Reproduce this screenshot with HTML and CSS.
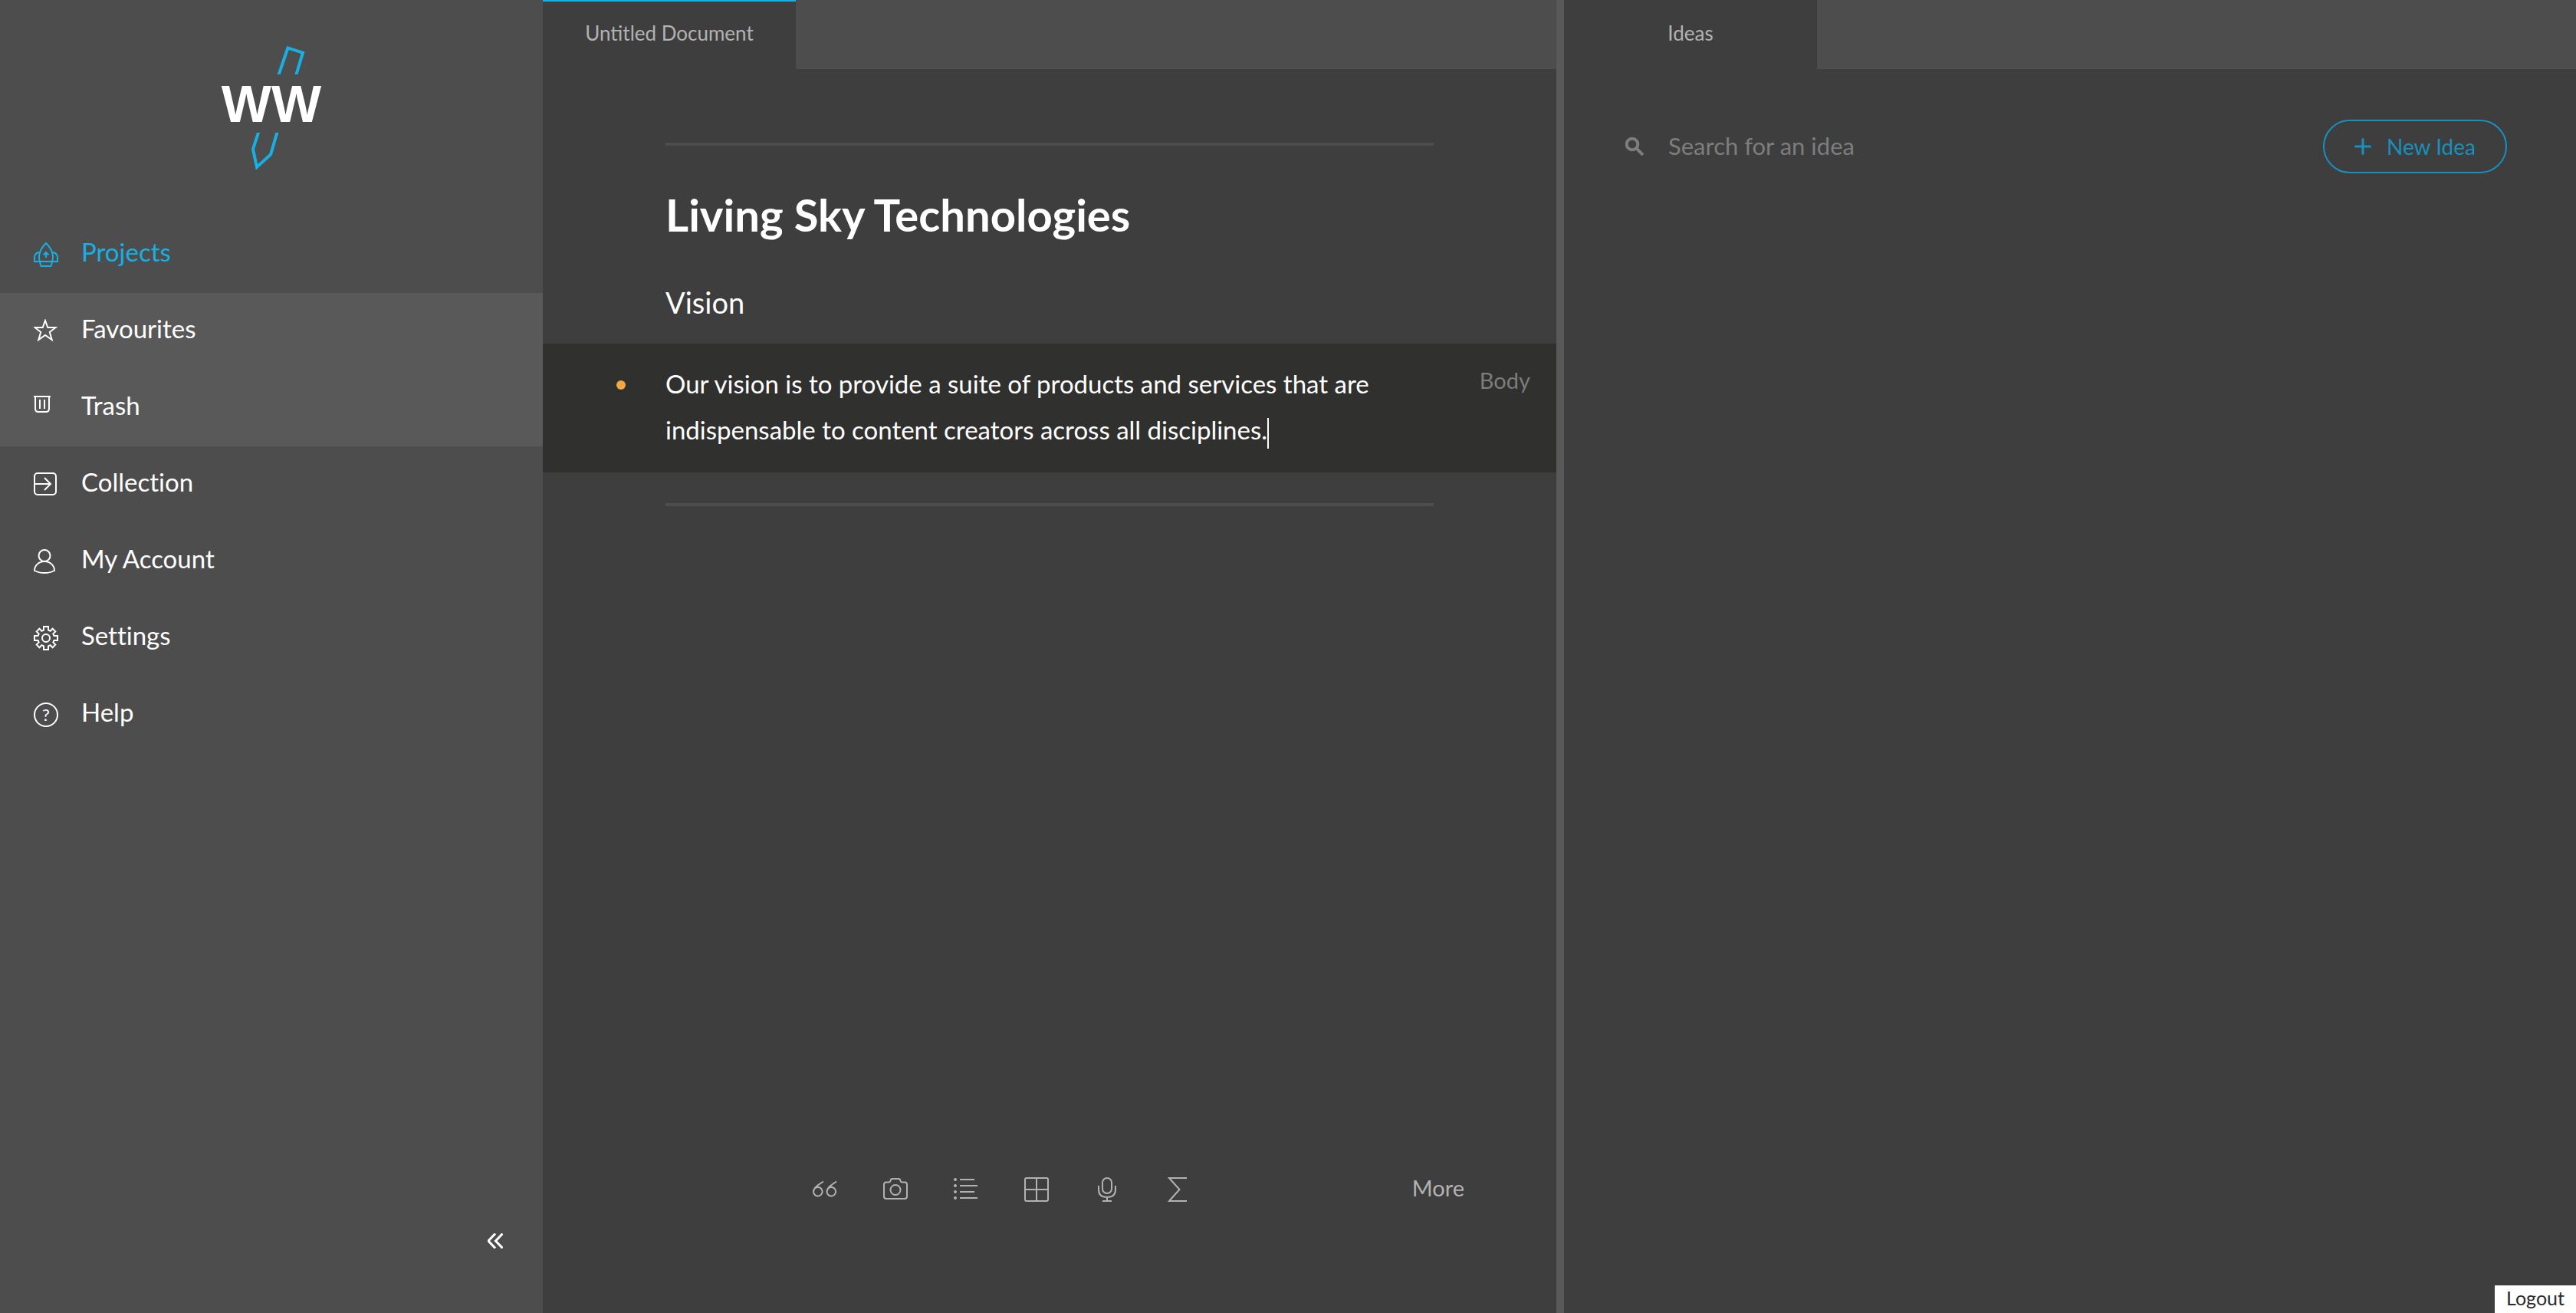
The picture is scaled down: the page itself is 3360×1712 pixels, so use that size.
FILE: index.html
```html
<!DOCTYPE html>
<html lang="en">
<head>
<meta charset="utf-8">
<title>Untitled Document</title>
<link rel="stylesheet" href="styles.css">
</head>
<body>
<div class="app">
  <aside class="sidebar">
    <a class="logo" href="#" aria-label="Home">
      <svg width="128" height="162" viewBox="30 20 128 162">
        <g class="logo-pencil">
          <path d="M103.2 58.500L115.400 22.500L135 28.700L126 58.500" />
          <path d="M77.600 131L70 154.500L75 178L93 161.500L102 131" />
        </g>
        <rect class="logo-gap" x="60" y="57" width="80" height="76" />
        <text class="logo-text" x="94" y="119" text-anchor="middle">WW</text>
      </svg>
    </a>
    <nav class="menu">
      <a class="menu-item menu-item-active" href="#">
        <svg class="icon" viewBox="0 0 32 32"><path d="M16 1C11 6 7 12.500 7 18.500C7 21 7.300 23 7.800 25L9.500 31H22.500L24.200 25C24.700 23 25 21 25 18.500C25 12.500 21 6 16 1Z"/><path d="M8 13C3.500 13 1 16 1 20.500V25H31V20.500C31 16 28.500 13 24 13"/><path d="M16 20V13M12.500 16.500L16 13L19.500 16.500"/></svg>
        <span class="menu-label">Projects</span>
      </a>
      <a class="menu-item menu-item-sub" href="#">
        <svg class="icon" viewBox="0 0 32 32"><path d="M15 2L18.300 11H28.500L20.800 17L23.700 27L15 21L6.300 27L9.200 17L1.500 11H11.700Z"/></svg>
        <span class="menu-label">Favourites</span>
      </a>
      <a class="menu-item menu-item-sub" href="#">
        <svg class="icon" viewBox="0 0 32 32"><path d="M0 1H22M2 1V17Q2 21 6 21H16Q20 21 20 17V1M8 5V17M14 5V17"/></svg>
        <span class="menu-label">Trash</span>
      </a>
      <a class="menu-item" href="#">
        <svg class="icon" viewBox="0 0 32 32"><rect x="1" y="1" width="28" height="28" rx="4"/><path d="M1 15H22M14 7L22 15L14 23"/></svg>
        <span class="menu-label">Collection</span>
      </a>
      <a class="menu-item" href="#">
        <svg class="icon" viewBox="0 0 32 32"><circle cx="14" cy="8.500" r="7.500"/><path d="M14 16C7 16 1 21 1 28C5 30.300 9 31 14 31S23 30.300 27 28C27 21 21 16 14 16Z"/></svg>
        <span class="menu-label">My Account</span>
      </a>
      <a class="menu-item" href="#">
        <svg class="icon" viewBox="0 0 32 32"><path d="M13 5.600V1H19V5.600L21.600 6.700L24.600 3.700L28.300 7.400L25.300 10.400L26.400 13H31V19H26.400L25.300 21.600L28.300 24.600L24.600 28.300L21.600 25.300L19 26.400V31H13V26.400L10.400 25.300L7.400 28.300L3.700 24.600L6.700 21.600L5.600 19H1V13H5.600L6.700 10.400L3.700 7.400L7.400 3.700L10.400 6.700Z"/><circle cx="16" cy="16" r="5"/></svg>
        <span class="menu-label">Settings</span>
      </a>
      <a class="menu-item" href="#">
        <svg class="icon" viewBox="0 0 32 32"><circle cx="16" cy="16" r="15"/><text class="icon-text" x="16" y="24" text-anchor="middle">?</text></svg>
        <span class="menu-label">Help</span>
      </a>
    </nav>
    <button class="collapse" type="button" aria-label="Collapse menu">
      <svg width="20" height="20" viewBox="0 0 20 20"><path d="M10 0.500L1 10L10 19.500M19.500 0.500L10.500 10L19.500 19.500"/></svg>
    </button>
  </aside>

  <main class="editor">
    <div class="tabs"><button class="tab tab-current" type="button">Untitled Document</button></div>
    <article class="document">
      <hr class="rule">
      <h1 class="title">Living Sky Technologies</h1>
      <h2 class="subtitle">Vision</h2>
      <div class="block">
        <span class="bullet"></span>
        <p class="block-text">Our vision is to provide a suite of products and services that are indispensable to content creators across all disciplines.<span class="caret"></span></p>
        <span class="block-kind">Body</span>
      </div>
      <hr class="rule">
    </article>
    <div class="toolbar">
      <button class="tool" type="button" aria-label="Quote"><svg viewBox="0 0 32 32"><path d="M14 5.500C7 10 1 14 1 19A5.800 5.800 0 1 0 3.200 14.200M31 5.500C24 10 18.500 14 18.500 19A5.800 5.800 0 1 0 20.700 14.200"/></svg></button>
      <button class="tool" type="button" aria-label="Image"><svg viewBox="0 0 32 32"><path d="M4 6.500H7Q9 6.500 9.500 4.500Q10 2 12 2H20Q22 2 22.500 4.500Q23 6.500 25 6.500H28Q31 6.500 31 9.500V25Q31 28 28 28H4Q1 28 1 25V9.500Q1 6.500 4 6.500Z"/><circle cx="16" cy="16.500" r="6.500"/></svg></button>
      <button class="tool" type="button" aria-label="List"><svg viewBox="0 0 32 32"><path d="M8 3H27M8 11H31M8 19H27M8 27H31"/><g class="dots"><circle cx="2" cy="3" r="2"/><circle cx="2" cy="11" r="2"/><circle cx="2" cy="19" r="2"/><circle cx="2" cy="27" r="2"/></g></svg></button>
      <button class="tool" type="button" aria-label="Table"><svg viewBox="0 0 32 32"><rect x="1" y="1" width="30" height="30" rx="2"/><path d="M16 1V31M1 16H31"/></svg></button>
      <button class="tool" type="button" aria-label="Record"><svg viewBox="0 0 32 32"><rect x="10" y="1" width="12" height="20" rx="6"/><path d="M5 11V16Q5 26 16 26Q27 26 27 16V11M16 26V31M10 31H22"/></svg></button>
      <button class="tool" type="button" aria-label="Formula"><svg viewBox="0 0 32 32"><path d="M28 1H5L18.500 16L5 31H28"/></svg></button>
      <button class="more" type="button">More</button>
    </div>
  </main>

  <div class="divider"></div>

  <section class="ideas">
    <div class="tabs"><button class="tab" type="button">Ideas</button></div>
    <div class="ideas-bar">
      <label class="search-label" for="search" aria-label="Search ideas">
        <svg width="24" height="24" viewBox="0 0 24 24"><circle cx="9" cy="9" r="7.300"/><path d="M14 14L23 23"/></svg>
      </label>
      <input class="search" id="search" type="text" placeholder="Search for an idea">
      <button class="new-idea" type="button">
        <svg width="22" height="22" viewBox="0 0 22 22"><path d="M11 1.500V20.500M1.500 11H20.500"/></svg>
        New Idea
      </button>
    </div>
  </section>
</div>
<button class="logout" type="button">Logout</button>
</body>
</html>
```
FILE: styles.css
```css
* {
  box-sizing: border-box;
}

body {
  margin: 0;
  background: #3e3e3e;
  color: #fff;
  font-family: Lato, "Open Sans", sans-serif;
  font-size: 33px;
}

button {
  padding: 0;
  border: 0;
  background: none;
  color: inherit;
  font: inherit;
  cursor: pointer;
}

svg {
  display: block;
  fill: none;
  stroke: currentColor;
  stroke-width: 2;
}

.app {
  display: grid;
  grid-template-columns: 708px 661fr 10px 660fr;
  min-height: 100vh;
}

/* Sidebar */

.sidebar {
  display: flex;
  flex-direction: column;
  padding-bottom: 84px;
  background: #4d4d4d;
}

.logo {
  align-self: center;
  margin: 60px 0;
}

.logo svg {
  overflow: visible;
}

.logo-pencil {
  stroke: #16b0e4;
  stroke-width: 4;
}

.logo-gap {
  fill: #4d4d4d;
  stroke: none;
}

.logo-text {
  fill: #fff;
  stroke: none;
  font: bold 69px "Liberation Sans", sans-serif;
}

.menu-item {
  display: flex;
  align-items: center;
  gap: 30px;
  height: 100px;
  padding: 0 44px;
  color: #fff;
  text-decoration: none;
}

.menu-item-active {
  color: #16b0e4;
}

.menu-item-sub {
  background: #595959;
}

.menu-label {
  padding-bottom: 8px;
  font-variant-ligatures: none;
}

.icon {
  width: 32px;
  height: 32px;
}

.icon-text {
  fill: currentColor;
  stroke: none;
  font-size: 22px;
}

.collapse {
  align-self: flex-end;
  margin-top: auto;
  margin-right: 52px;
}

.collapse svg {
  stroke-width: 3;
}

/* Panels */

.editor,
.ideas {
  display: flex;
  flex-direction: column;
  background: #3e3e3e;
}

.divider {
  background: #595959;
}

.tabs {
  display: flex;
  height: 90px;
  background: #4d4d4d;
}

.tab {
  width: 330px;
  padding-bottom: 6px;
  border-top: 2px solid transparent;
  background: #3e3e3e;
  color: #b2b2b2;
  font-size: 26px;
}

.tab-current {
  border-top-color: #16b0e4;
}

/* Document */

.document {
  padding-top: 96px;
}

.rule {
  height: 4px;
  margin: 0 160px;
  border: 0;
  background: #4d4d4d;
}

.title {
  margin: 56px 160px 0;
  font-size: 58px;
  line-height: 68px;
}

.subtitle {
  margin: 58px 160px 32px;
  font-size: 38px;
  font-weight: 400;
  line-height: 44px;
}

.block {
  display: grid;
  grid-template-columns: 160px minmax(0, 1000px) 1fr;
  margin-bottom: 40px;
  padding: 22px 0 26px;
  background: #30302e;
}

.bullet {
  width: 12px;
  height: 12px;
  margin: 26px 0 0 96px;
  border-radius: 50%;
  background: #f4a742;
}

.block-text {
  margin: 0;
  padding-right: 60px;
  line-height: 60px;
}

.caret {
  display: inline-block;
  width: 2px;
  height: 40px;
  background: #fff;
  vertical-align: middle;
}

.block-kind {
  justify-self: end;
  padding-right: 34px;
  color: #7d7d7d;
  font-size: 29px;
  line-height: 52px;
}

/* Toolbar */

.toolbar {
  display: flex;
  align-items: center;
  gap: 60px;
  margin-top: auto;
  padding: 0 120px 142px 352px;
  color: #b2b2b2;
}

.tool svg {
  width: 32px;
  height: 32px;
}

.dots {
  fill: currentColor;
  stroke: none;
}

.more {
  margin-left: auto;
  padding-bottom: 4px;
  font-size: 29px;
}

/* Ideas */

.ideas-bar {
  display: flex;
  align-items: center;
  padding: 66px 90px 0 80px;
}

.search-label {
  color: #7d7d7d;
}

.search-label svg {
  stroke-width: 4;
}

.search {
  flex: 1;
  min-width: 0;
  padding: 0 0 2px 32px;
  border: 0;
  outline: 0;
  background: none;
  color: #fff;
  font: inherit;
  font-size: 31px;
}

.search::placeholder {
  color: #7d7d7d;
}

.new-idea {
  display: flex;
  align-items: center;
  justify-content: center;
  gap: 20px;
  width: 240px;
  height: 70px;
  border: 2px solid #1790bd;
  border-radius: 35px;
  color: #1790bd;
  font-size: 28px;
}

.new-idea svg {
  stroke-width: 3;
  stroke-linecap: round;
}

.logout {
  position: fixed;
  right: 0;
  bottom: 0;
  height: 36px;
  padding: 0 15px 4px;
  background: #fff;
  color: #2c2c2c;
  font-size: 25px;
}
```
